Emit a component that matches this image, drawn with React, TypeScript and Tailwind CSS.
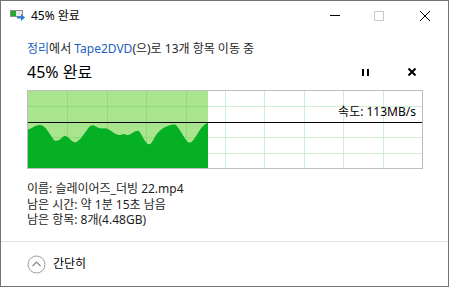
import React from 'react';

const font = {fontFamily: '"Noto Sans", "Noto Sans CJK KR", sans-serif'};

// wave of the current transfer speed, in graph coordinates (394 x 77)
const wave: [number, number][] = [
  [0, 38.3], [1.3, 38.3], [10.3, 33], [17, 35.7], [25.3, 48.3], [27, 50], [32, 49],
  [36.3, 44], [40.3, 46.3], [46, 52.3], [52, 49], [58.7, 39], [63.7, 33], [72, 38],
  [78.7, 36.7], [85.3, 41.7], [91.3, 44.7], [96, 42.3], [100.3, 45], [108.7, 39],
  [112, 40.7], [116, 49], [120.3, 54], [123.7, 52.3], [128.7, 42.3], [135.3, 36.7],
  [145.3, 33], [148.7, 34], [154.7, 44], [160.3, 52.3], [164.7, 50.7], [173.7, 35.7],
  [180, 31.5],
];

const GRAPH_W = 394;
const GRAPH_H = 77;
const DONE_W = 180;

// smooth the points with quadratic curves through the midpoints
const wavePath = (): string => {
  let d = `M0,${GRAPH_H} L${wave[0][0]},${wave[0][1]}`;
  for (let i = 1; i < wave.length - 1; i++) {
    const [x, y] = wave[i];
    const [nx, ny] = wave[i + 1];
    d += ` Q${x},${y} ${(x + nx) / 2},${(y + ny) / 2}`;
  }
  const [lx, ly] = wave[wave.length - 1];
  d += ` L${lx},${ly} L${DONE_W},${GRAPH_H} Z`;
  return d;
};

function TransferIcon() {
  return (
    <svg width="16" height="12" viewBox="0 0 16 12">
      <rect x="0.5" y="0.5" width="12" height="6" fill="#e6e6e6" stroke="#8c8c8c"/>
      <rect x="1" y="1" width="5" height="5" fill="#1fae2a"/>
      <path d="M7 6.5h4V4l4 3.5-4 3.5V8.5H7z" fill="#2b7cd3"/>
    </svg>
  );
}

function SpeedGraph() {
  const cols = Array.from({length: 9}, (_, i) => Math.round(39.4 * (i + 1)) + 0.5);
  const rows = Array.from({length: 4}, (_, i) => Math.round(15.4 * (i + 1)) + 0.5);

  return (
    <svg width={GRAPH_W} height={GRAPH_H} className="block" shapeRendering="crispEdges">
      <rect width={GRAPH_W} height={GRAPH_H} fill="#ffffff"/>
      <rect width={DONE_W} height={GRAPH_H} fill="#a9e48f"/>
      {cols.map((x) => (
        <line key={'c' + x} x1={x} x2={x} y1={0} y2={GRAPH_H}
          stroke={x < DONE_W ? '#93d97a' : '#ccefcf'}/>
      ))}
      {rows.map((y) => (
        <g key={'r' + y}>
          <line x1={0} x2={DONE_W} y1={y} y2={y} stroke="#93d97a"/>
          <line x1={DONE_W} x2={GRAPH_W} y1={y} y2={y} stroke="#ccefcf"/>
        </g>
      ))}
      <path d={wavePath()} fill="#06b025" shapeRendering="auto"/>
      <line x1={0} x2={GRAPH_W} y1={31.5} y2={31.5} stroke="#000000"/>
    </svg>
  );
}

export default function App() {
  return (
    <div style={font}
      className="w-[449px] h-[287px] border border-[#747474] bg-white text-[#000000] flex flex-col overflow-hidden">
      {/* title bar */}
      <div className="flex items-center h-[29px] shrink-0">
        <div className="pl-[9px] pt-[1px]">
          <TransferIcon/>
        </div>
        <span className="ml-[5px] text-[12px] leading-[16px]">45% 완료</span>
        <div className="ml-auto flex h-full">
          <div className="w-[46px] flex items-center justify-center">
            <div className="w-[10px] h-[1px] bg-[#000000] ml-[4px]"/>
          </div>
          <div className="w-[46px] flex items-center justify-center">
            <div className="w-[10px] h-[10px] border border-[#cccccc]"/>
          </div>
          <div className="w-[46px] flex items-center justify-center">
            <svg width="10" height="10" viewBox="0 0 10 10">
              <path d="M0 0L10 10M10 0L0 10" stroke="#000000" strokeWidth="1"/>
            </svg>
          </div>
        </div>
      </div>

      <div className="pl-[26px] pr-[26px]">
        <div className="mt-[11px] text-[12px] leading-[16px] text-[#1e1e1e]">
          <span className="text-[#1c5fbf]">정리</span>에서{' '}
          <span className="text-[#1c5fbf]">Tape2DVD</span>(으)로 13개 항목 이동 중
        </div>

        <div className="mt-[4px] flex items-center h-[22px]">
          <span className="text-[16px] leading-[22px] font-normal">45% 완료</span>
          <div className="ml-auto flex items-center">
            <div className="flex gap-[3px] mr-[39px]">
              <div className="w-[2px] h-[7px] bg-[#000000]"/>
              <div className="w-[2px] h-[7px] bg-[#000000]"/>
            </div>
            <svg width="8" height="8" viewBox="0 0 8 8" className="mr-[6px]">
              <path d="M0.5 0.5L7.5 7.5M7.5 0.5L0.5 7.5" stroke="#000000" strokeWidth="2"/>
            </svg>
          </div>
        </div>

        <div className="relative mt-[7px] w-[396px] border border-[#bdbdbd]">
          <SpeedGraph/>
          <div className="absolute right-[6px] top-[13px] text-[12px] leading-[16px]">
            속도: 113MB/s
          </div>
        </div>

        <div className="mt-[12px] text-[12px] leading-[15.5px] text-[#1e1e1e]">
          <div>이름: 슬레이어즈_더빙 22.mp4</div>
          <div>남은 시간: 약 1분 15초 남음</div>
          <div>남은 항목: 8개(4.48GB)</div>
        </div>
      </div>

      <div className="mt-auto h-[45px] border-t border-[#e3e3e3] flex items-center pl-[26px] shrink-0">
        <svg width="19" height="19" viewBox="0 0 19 19">
          <circle cx="9.5" cy="9.5" r="8.5" fill="none" stroke="#9b9b9b"/>
          <path d="M5.5 11L9.5 7L13.5 11" fill="none" stroke="#8a8a8a" strokeWidth="1.2"/>
        </svg>
        <span className="ml-[7px] text-[12px] leading-[16px]">간단히</span>
      </div>
    </div>
  );
}
